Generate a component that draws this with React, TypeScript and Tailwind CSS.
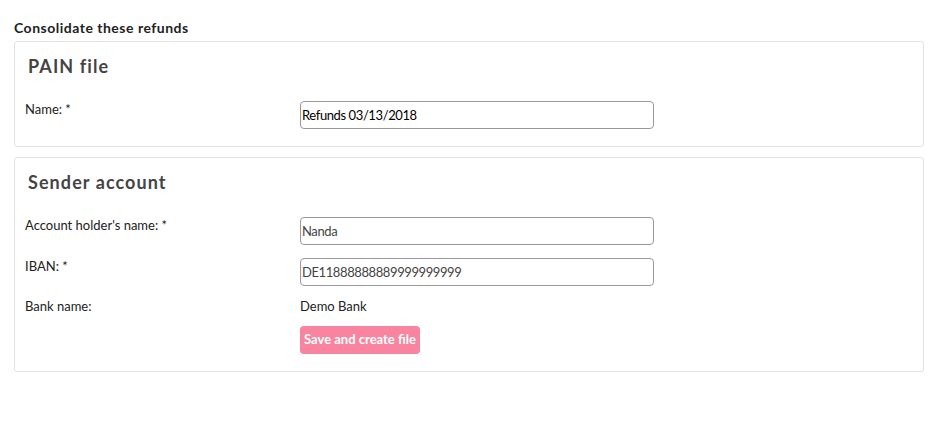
import React from "react";

function Row({ label, children, className = "" }: { label: string; children: React.ReactNode; className?: string }) {
  return (
    <div className={`flex items-start ${className}`}>
      <div className="w-[275px] shrink-0 text-[13px] leading-[16px] text-[#222]">{label}</div>
      {children}
    </div>
  );
}

function Field({ value, dark }: { value: string; dark?: boolean }) {
  return (
    <input
      readOnly
      value={value}
      className={`h-[28px] w-[354px] rounded-[4px] border border-[#999] bg-white px-[1px] text-[13px] tracking-[-0.4px] outline-none ${dark ? "text-black" : "text-[#444]"}`}
      style={{ fontFamily: "Lato, sans-serif" }}
    />
  );
}

export default function App() {
  return (
    <div className="min-h-screen bg-white px-[14px] pt-[20px] font-['Lato',sans-serif]">
      <h1 className="mb-[5px] text-[14px] font-bold leading-[16px] tracking-[0.5px] text-[#222]">
        Consolidate these refunds
      </h1>

      <div className="mb-[10px] w-[910px] rounded-[3px] border border-[#e2e2e2] pb-[17px]">
        <h2 className="pl-[13px] pt-[13px] text-[18px] font-bold leading-[22px] tracking-[0.06em] text-[#444]">PAIN file</h2>
        <div className="mt-[24px] flex flex-col pl-[10px]">
          <Row label="Name: *">
            <Field value="Refunds 03/13/2018" dark />
          </Row>
        </div>
      </div>

      <div className="w-[910px] rounded-[3px] border border-[#e2e2e2] pb-[17px]">
        <h2 className="pl-[13px] pt-[13px] text-[18px] font-bold leading-[22px] tracking-[0.06em] text-[#444]">Sender account</h2>
        <div className="mt-[24px] flex flex-col pl-[10px]">
          <Row label="Account holder's name: *">
            <Field value="Nanda" />
          </Row>
          <Row label="IBAN: *" className="mt-[13px]">
            <Field value="DE11888888889999999999" />
          </Row>
          <Row label="Bank name:" className="mt-[12px]">
            <div className="text-[13px] leading-[16px] text-[#222]">Demo Bank</div>
          </Row>
          <Row label="" className="mt-[12px]">
            <button className="h-[28px] rounded-[4px] bg-[#f8849f] px-[4px] text-[13px] font-bold text-white">
              Save and create file
            </button>
          </Row>
        </div>
      </div>
    </div>
  );
}
